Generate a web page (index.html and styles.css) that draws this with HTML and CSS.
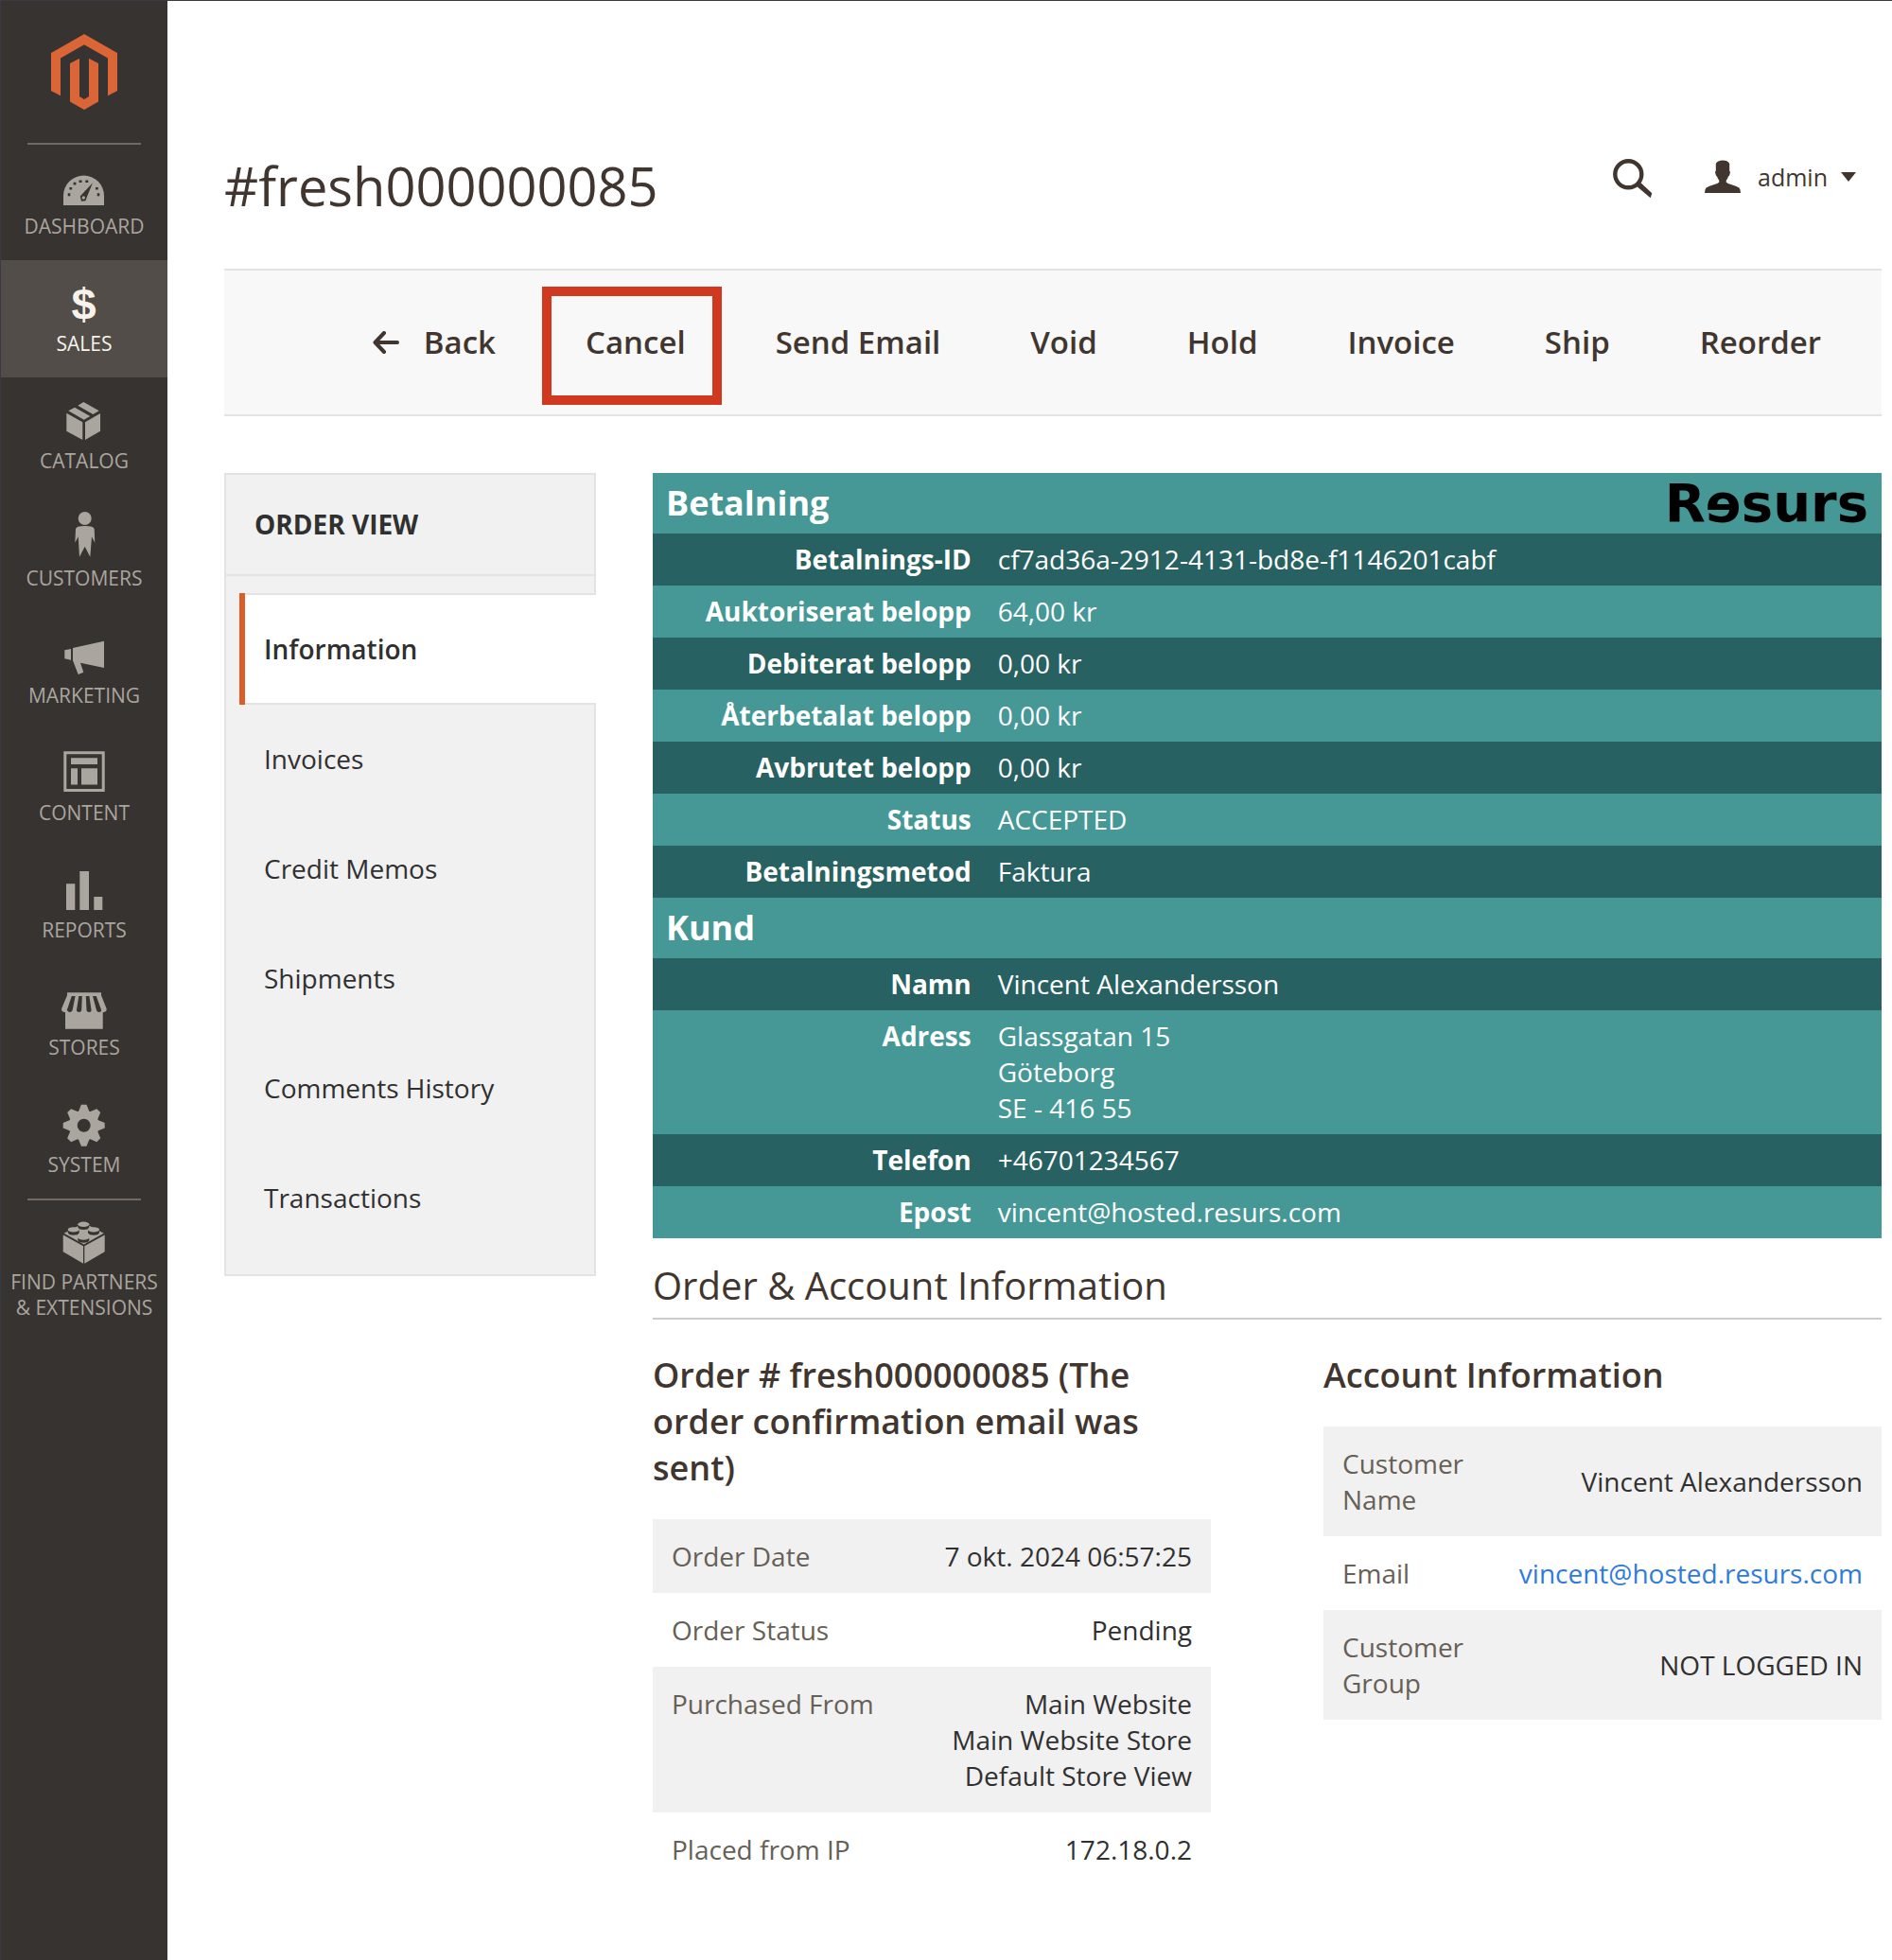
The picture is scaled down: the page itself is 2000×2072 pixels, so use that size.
FILE: index.html
```html
<!DOCTYPE html>
<html lang="en">
<head>
<meta charset="utf-8">
<title>#fresh000000085</title>
<link rel="stylesheet" href="styles.css">
</head>
<body>
<div class="app">
  <aside class="sidebar">
    <a class="brand" href="#" aria-label="Magento">
      <svg width="70" height="80" viewBox="54 36 70 80"><path d="M54 56 89 36l35 20v40l-10 5.300V61.500L89 47.300 64 61.500v39.800L54 96ZM74 67l10-5.300V102l5 3 5-3V61.700l10 5.300v40.500L89 116l-15-8.500Z"/></svg>
    </a>
    <nav class="menu" aria-label="Main menu">
      <a class="menu-item" href="#">
        <svg class="menu-icon" viewBox="59 16 60 56"><path d="M67 66V56a21.500 21.500 0 0 1 43 0v10Z"/><g class="cut"><path d="M98 42.300 84.700 56.500l1.300 5.300 4.500-.6 1.300-4Z"/><path d="M71.700 53.200h2.600v3h-2.600zM73.400 47h2.800v2.600h-2.800zM77.600 41.800h2.800v2.600h-2.800zM83.500 39.500h3v2.400h-3zM90.300 39.500h3v2.400h-3zM101 47h2.800v2.600h-2.800zM102.700 53.200h2.600v3h-2.600z"/></g><circle cx="88.300" cy="58" r="1.700"/></svg>
        <span>DASHBOARD</span>
      </a>
      <a class="menu-item is-active" href="#" aria-current="page">
        <svg class="menu-icon" viewBox="59 16 60 56"><text class="dollar" x="88.500" y="62.500" text-anchor="middle">$</text></svg>
        <span>SALES</span>
      </a>
      <a class="menu-item" href="#">
        <svg class="menu-icon" viewBox="59 16 60 56"><path d="M70.300 37.700l17 9.600V66l-17-9.300ZM90 47.300 106 38v18.700L90 66ZM72.300 35.300l6.700-3.600 16.300 9.300-6.600 3.700ZM82.300 29.700l6-3.700 16.400 9.300-6.400 3.700Z"/></svg>
        <span>CATALOG</span>
      </a>
      <a class="menu-item" href="#">
        <svg class="menu-icon" viewBox="59 16 60 56"><circle cx="89.700" cy="25" r="7"/><path d="M79.300 50.700 80 36.300q.5-3.300 9.700-3.300t10 3.300l.6 14.400-3.300-6.400-1.700 21.400-5.600-11-5.700 11-1.300-21.400Z"/></svg>
        <span>CUSTOMERS</span>
      </a>
      <a class="menu-item" href="#">
        <svg class="menu-icon" viewBox="59 16 60 56"><path d="M68.300 40.300 75 39v11.700l-6.700-1.400ZM77 38l33-7.300V59l-25-5.300 3.300 10-5.600 2.300L77 51.300Z"/></svg>
        <span>MARKETING</span>
      </a>
      <a class="menu-item" href="#">
        <svg class="menu-icon" viewBox="59 16 60 56"><path fill-rule="evenodd" d="M67.300 23.300h43.400V66H67.300ZM70.300 26.300V63h37.400V26.300Z"/><path d="M75 30.300h28V37H75ZM75 41.300h7v17.300h-7ZM86 41.300h17v17.300H86Z"/></svg>
        <span>CONTENT</span>
      </a>
      <a class="menu-item" href="#">
        <svg class="menu-icon" viewBox="59 16 60 56"><path d="M70 39.300h9.300V67H70ZM84.300 26H94v41h-9.700ZM99.300 53h9v14h-9Z"/></svg>
        <span>REPORTS</span>
      </a>
      <a class="menu-item" href="#">
        <svg class="menu-icon" viewBox="59 16 60 56"><path d="M71 30.300h36v3l5.600 14q.6 3.700-3.900 3.900v17.500H69V51.200q-4.500-.2-3.900-3.900l5.900-14Z"/><path class="cut" d="M75.800 34h3.800l-3 15q-.9 2-2.800 2t-3-2.300ZM83.300 34h3.500l-.6 15q-.5 2-2.700 2t-2.600-2ZM90.800 34h3.600l2.200 15q0 2-2.400 2t-2.700-2ZM98 34h3.800l5.300 14.700q.2 2.300-2.200 2.300t-2.900-2Z"/></svg>
        <span>STORES</span>
      </a>
      <a class="menu-item" href="#">
        <svg class="menu-icon" viewBox="-29.700 -30.700 60 56"><circle class="gear-ring" r="11.500"/><path d="M-6-14-2.800-22h5.600L6-14ZM-6 14l3.200 8h5.600L6 14ZM-14-6l-8 3.200v5.600l8 3.200ZM14-6l8 3.200v5.600L14 6Z"/><path transform="rotate(45)" d="M-6-14-2.800-22h5.600L6-14ZM-6 14l3.200 8h5.600L6 14ZM-14-6l-8 3.200v5.600l8 3.200ZM14-6l8 3.200v5.600L14 6Z"/></svg>
        <span>SYSTEM</span>
      </a>
      <a class="menu-item partners" href="#">
        <svg class="menu-icon" viewBox="59 16 60 56"><path d="M66.700 38.600 88 50.300v18.400L66.700 56.300ZM89.300 50.300l21.400-11.700v17.700L89.300 68.700ZM67.700 36.700l21-11 21 11-21 11.800Z"/><g class="cut"><path d="M82.300 27h12v3.500q-1 2.500-6 2.500t-6-2.500ZM71.700 32.700h12v3.500q-1 2.500-6 2.500t-6-2.500ZM93 32.700h12v3.500q-1 2.500-6 2.500t-6-2.500ZM82.300 41.700h12v2.500q-1 2.500-6 2.500t-6-2.500Z"/></g><ellipse cx="88.300" cy="27.300" rx="6" ry="2.700"/><ellipse cx="77.700" cy="32.900" rx="6" ry="2.700"/><ellipse cx="99" cy="32.900" rx="6" ry="2.700"/><ellipse cx="88.300" cy="41.300" rx="6" ry="2.400"/></svg>
        <span>FIND PARTNERS<br>&amp; EXTENSIONS</span>
      </a>
    </nav>
  </aside>

  <main class="page">
    <header class="page-header">
      <h1 class="page-title">#fresh000000085</h1>
      <div class="header-tools">
        <button class="icon-button" type="button" aria-label="Search">
          <svg width="42" height="42" viewBox="0 0 42 42"><circle cx="16.300" cy="16.300" r="14" fill="none" stroke="currentColor" stroke-width="4.400"/><path fill="currentColor" d="M25.500 29.300l4-4L41.300 36.300l-1.600 5Z"/></svg>
        </button>
        <button class="user-button" type="button">
          <svg width="38" height="36" viewBox="0 0 38 36"><path fill="currentColor" d="M19 .5q5.500 0 7.200 3.400v7.500l.8 1.600-1 3.800-1 .6q-.8 2.700-2.200 4v2.300q1.500 1.300 5 2.300 6 1.600 8.600 3.600 1.400 1.200 1.600 5.400H0q.2-4.200 1.600-5.400Q4.200 27.600 10.200 26q3.500-1 5-2.300v-2.300q-1.400-1.300-2.200-4l-1-.6-1-3.800.8-1.600V4Q13.500.5 19 .5Z"/></svg>
          <span>admin</span>
          <span class="caret"></span>
        </button>
      </div>
    </header>

    <div class="toolbar">
      <button class="action" type="button"><svg width="28" height="24" viewBox="0 0 28 24"><path d="M12 2 2.500 12 12 22M3 12h23" fill="none" stroke="currentColor" stroke-width="4" stroke-linecap="round" stroke-linejoin="round"/></svg>Back</button>
      <button class="action is-marked" type="button">Cancel</button>
      <button class="action" type="button">Send Email</button>
      <button class="action" type="button">Void</button>
      <button class="action" type="button">Hold</button>
      <button class="action" type="button">Invoice</button>
      <button class="action" type="button">Ship</button>
      <button class="action" type="button">Reorder</button>
    </div>

    <div class="columns">
      <nav class="order-nav" aria-label="Order view">
        <h2 class="order-nav-title">ORDER VIEW</h2>
        <ul class="order-nav-list">
          <li><a class="order-nav-link is-active" href="#" aria-current="page">Information</a></li>
          <li><a class="order-nav-link" href="#">Invoices</a></li>
          <li><a class="order-nav-link" href="#">Credit Memos</a></li>
          <li><a class="order-nav-link" href="#">Shipments</a></li>
          <li><a class="order-nav-link" href="#">Comments History</a></li>
          <li><a class="order-nav-link" href="#">Transactions</a></li>
        </ul>
      </nav>

      <div class="content">
        <table class="payment">
          <colgroup><col class="payment-labels"><col></colgroup>
          <tbody>
            <tr class="payment-head"><th colspan="2"><div class="payment-bar"><span>Betalning</span><span class="resurs">Rɘsurs</span></div></th></tr>
            <tr><th scope="row">Betalnings-ID</th><td>cf7ad36a-2912-4131-bd8e-f1146201cabf</td></tr>
            <tr><th scope="row">Auktoriserat belopp</th><td>64,00 kr</td></tr>
            <tr><th scope="row">Debiterat belopp</th><td>0,00 kr</td></tr>
            <tr><th scope="row">Återbetalat belopp</th><td>0,00 kr</td></tr>
            <tr><th scope="row">Avbrutet belopp</th><td>0,00 kr</td></tr>
            <tr><th scope="row">Status</th><td>ACCEPTED</td></tr>
            <tr><th scope="row">Betalningsmetod</th><td>Faktura</td></tr>
            <tr class="payment-head"><th colspan="2"><div class="payment-bar">Kund</div></th></tr>
            <tr><th scope="row">Namn</th><td>Vincent Alexandersson</td></tr>
            <tr><th scope="row">Adress</th><td>Glassgatan 15<br>Göteborg<br>SE - 416 55</td></tr>
            <tr><th scope="row">Telefon</th><td>+46701234567</td></tr>
            <tr><th scope="row">Epost</th><td>vincent@hosted.resurs.com</td></tr>
          </tbody>
        </table>

        <section>
          <h2 class="section-title">Order &amp; Account Information</h2>
          <div class="info-grid">
            <div>
              <h3 class="info-title">Order # fresh000000085 (The order confirmation email was sent)</h3>
              <table class="info">
                <tbody>
                  <tr><th scope="row">Order Date</th><td>7 okt. 2024 06:57:25</td></tr>
                  <tr><th scope="row">Order Status</th><td>Pending</td></tr>
                  <tr><th scope="row">Purchased From</th><td>Main Website<br>Main Website Store<br>Default Store View</td></tr>
                  <tr><th scope="row">Placed from IP</th><td>172.18.0.2</td></tr>
                </tbody>
              </table>
            </div>
            <div>
              <h3 class="info-title">Account Information</h3>
              <table class="info">
                <tbody>
                  <tr><th scope="row">Customer Name</th><td>Vincent Alexandersson</td></tr>
                  <tr><th scope="row">Email</th><td><a href="#">vincent@hosted.resurs.com</a></td></tr>
                  <tr><th scope="row">Customer Group</th><td>NOT LOGGED IN</td></tr>
                </tbody>
              </table>
            </div>
          </div>
        </section>
      </div>
    </div>
  </main>
</div>
</body>
</html>
```
FILE: styles.css
```css
* {
  box-sizing: border-box;
}

body {
  margin: 0;
  background: #fff;
  color: #303030;
  font: 28px/38px "Open Sans", "Noto Sans", sans-serif;
}

h1, h2, h3, ul {
  margin: 0;
  padding: 0;
}

button {
  padding: 0;
  border: 0;
  background: none;
  color: inherit;
  font: inherit;
}

table {
  width: 100%;
  border-collapse: collapse;
}

.app {
  display: flex;
  min-height: 100vh;
  border-top: 1px solid #3b3a42;
}

/* Sidebar */

.sidebar {
  flex: 0 0 177px;
  border-left: 1px solid #393a45;
  background: #373330;
}

.brand {
  display: flex;
  justify-content: center;
  margin: 0 28px;
  padding: 35px 0;
  border-bottom: 2px solid #736963;
  fill: #da6536;
}

.menu-item {
  display: flex;
  flex-direction: column;
  align-items: center;
  padding: 16px 0 22px;
  color: #aaa69f;
  fill: #aaa69f;
  font-size: 21px;
  line-height: 27px;
  text-align: center;
  text-decoration: none;
  white-space: nowrap;
}

.menu-item:first-child {
  padding-top: 14px;
}

.menu-item.is-active {
  background: #524d49;
  color: #f7f3eb;
  fill: #f7f3eb;
}

.menu-icon {
  width: 60px;
  height: 56px;
  margin-bottom: 3px;
}

.menu-icon .cut {
  fill: #373330;
}

.dollar {
  font: bold 47px "Liberation Sans", sans-serif;
}

.gear-ring {
  fill: none;
  stroke: #aaa69f;
  stroke-width: 9;
}

.partners::before {
  content: "";
  width: 120px;
  height: 2px;
  margin: -16px 0 14px;
  background: #736963;
}

/* Page header */

.page {
  flex: 1;
  min-width: 0;
  padding: 157px 11px 40px 60px;
}

.page-header {
  display: flex;
  justify-content: space-between;
  align-items: flex-start;
  padding-right: 27px;
  color: #41362f;
}

.page-title {
  font-size: 56px;
  font-weight: 400;
  line-height: 76px;
}

.header-tools {
  display: flex;
  gap: 55px;
  padding-top: 10px;
}

.icon-button {
  display: flex;
}

.user-button {
  display: flex;
  align-items: center;
  height: 38px;
  font-size: 25px;
}

.user-button svg {
  margin-right: 18px;
}

.caret {
  margin-left: 14px;
  border: 8px solid transparent;
  border-top: 10px solid #41362f;
  border-bottom: 0;
}

.toolbar {
  display: flex;
  justify-content: flex-end;
  align-items: center;
  gap: 95px;
  height: 156px;
  margin: 50px 0 60px;
  padding-right: 64px;
  border: solid #e3e3e3;
  border-width: 2px 0;
  background: #f8f8f8;
}

.action {
  position: relative;
  display: flex;
  align-items: center;
  gap: 26px;
  color: #41362f;
  font-size: 33px;
  font-weight: 600;
  line-height: 44px;
}

.is-marked::after {
  content: "";
  position: absolute;
  inset: -37px -38px -44px -46px;
  border: 10px solid #d03820;
}

/* Order navigation */

.columns {
  display: flex;
  align-items: flex-start;
  gap: 60px;
}

.order-nav {
  flex: 0 0 393px;
  padding-bottom: 22px;
  border: 2px solid #e3e3e3;
  background: #f1f1f1;
}

.order-nav-title {
  padding: 33px 30px 34px;
  border-bottom: 2px solid #e3e3e3;
  font-size: 28px;
  font-weight: 700;
}

.order-nav-list {
  margin: 18px -2px 0 14px;
  list-style: none;
}

.order-nav-link {
  display: block;
  padding: 38px 26px 40px;
  color: #303030;
  text-decoration: none;
}

.order-nav-link.is-active {
  padding-top: 40px;
  background: #fff;
  box-shadow: inset 6px 0 #dd5d29, inset 0 2px #e3e3e3, inset 0 -2px #e3e3e3;
  font-weight: 600;
}

/* Payment table */

.content {
  flex: 1;
  min-width: 0;
}

.payment {
  color: #fff;
  table-layout: fixed;
}

.payment-labels {
  width: 27%;
}

.payment tr {
  background: #459896;
}

.payment tr:nth-child(even) {
  background: #286162;
}

.payment th,
.payment td {
  padding: 8px 14px 9px;
  text-align: left;
  vertical-align: top;
}

.payment th {
  font-weight: 700;
  text-align: right;
}

.payment .payment-head th {
  padding: 8px 14px;
}

.payment-bar {
  display: flex;
  justify-content: space-between;
  align-items: center;
  font-size: 36px;
  line-height: 48px;
}

.resurs {
  color: #000;
  font: 700 56px/48px "DejaVu Sans", sans-serif;
}

/* Order and account details */

.section-title {
  margin: 23px 0 34px;
  padding-bottom: 7px;
  border-bottom: 2px solid #ccc;
  color: #41362f;
  font-size: 40px;
  font-weight: 400;
  line-height: 54px;
}

.info-grid {
  display: grid;
  grid-template-columns: 1fr 1fr;
  gap: 119px;
}

.info-title {
  margin-bottom: 30px;
  color: #41362f;
  font-size: 36px;
  font-weight: 600;
  line-height: 49px;
}

.info tr:nth-child(odd) {
  background: #f1f1f1;
}

.info th,
.info td {
  padding: 20px;
}

.info th {
  color: #666056;
  font-weight: 400;
  text-align: left;
  vertical-align: top;
}

.info td {
  text-align: right;
}

.info a {
  color: #2f7bd8;
  text-decoration: none;
}
```
